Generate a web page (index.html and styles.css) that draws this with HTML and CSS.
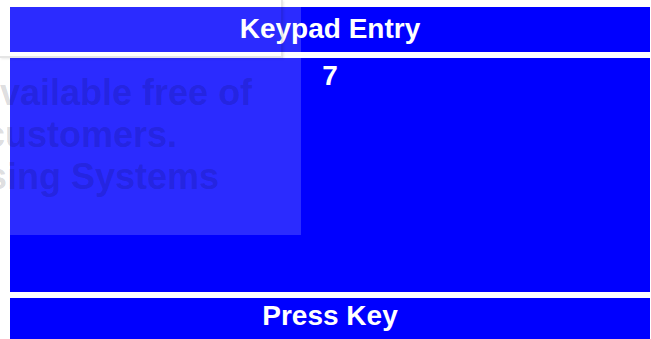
FILE: index.html
```html
<!DOCTYPE html>
<html lang="en">
<head>
    <meta charset="UTF-8">
    <meta name="viewport" content="width=device-width, initial-scale=1.0">
    <title>Keypad Entry</title>
    <link rel="stylesheet" href="styles.css">
</head>
<body>
    <div class="screen">
        <div class="bar title">Keypad Entry</div>
        <div class="entry">7</div>
        <div class="bar prompt">Press Key</div>
    </div>

    <!-- ghost of the window that sat on top when the shot was taken -->
    <div class="ghost">
        <div class="ghost-frame"></div>
        <div class="ghost-text">
            <div class="line1">vailable free of</div>
            <div class="line2">customers.</div>
            <div class="line3">sing Systems</div>
        </div>
    </div>
</body>
</html>
```

FILE: styles.css
```css
body {
    margin: 0;
    padding: 7px 1px 0 10px;
    background: #fff;
    font-family: "Liberation Sans", Arial, sans-serif;
    overflow: hidden;
}
.screen {
    display: flex;
    flex-direction: column;
    gap: 6px;
}
.bar {
    background-color: #0000ff;
    color: white;
    font-weight: bold;
    font-size: 28px;
    line-height: 32px;
    text-align: center;
}
.title {
    height: 45px;
    box-sizing: border-box;
    padding-top: 6px;
}
.entry {
    height: 234px;
    box-sizing: border-box;
    padding-top: 2px;
    background-color: #0000ff;
    color: white;
    font-weight: bold;
    font-size: 28px;
    line-height: 32px;
    text-align: center;
}
.prompt {
    height: 45px;
    box-sizing: border-box;
    padding-top: 2px;
}
.ghost {
    position: absolute;
    left: 0;
    top: 0;
    width: 301px;
    height: 235px;
    background: rgba(255, 255, 255, 0.17);
    overflow: hidden;
}
.ghost-frame {
    position: absolute;
    left: 0;
    top: 0;
    width: 281px;
    height: 56px;
    border-right: 2px solid rgba(0, 0, 0, 0.1);
    border-bottom: 2px solid rgba(0, 0, 0, 0.1);
    box-shadow: 1px 1px 2px rgba(0, 0, 0, 0.08);
}
.ghost-text {
    position: absolute;
    left: 0;
    top: 72px;
    font-size: 36px;
    line-height: 42px;
    font-weight: bold;
    color: rgba(0, 0, 20, 0.15);
    white-space: nowrap;
}
.line1 {
    margin-left: 0;
}
.line2 {
    margin-left: -15px;
}
.line3 {
    margin-left: -13px;
}
```
